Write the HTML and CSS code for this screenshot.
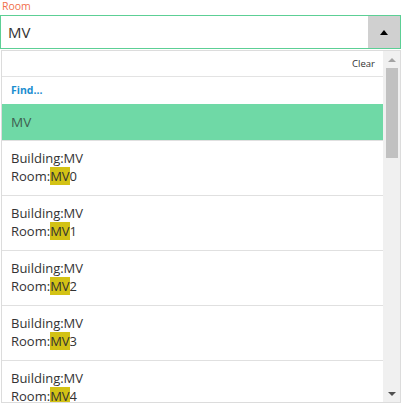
FILE: index.html
```html
<!DOCTYPE html>
<html>
<head>
<meta charset="utf-8">
<link rel="stylesheet" href="styles.css">
</head>
<body>
<div class="field">
  <div class="label">Room</div>
  <div class="input">
    <div class="value">MV</div>
    <div class="toggle"><span class="caret-up"></span></div>
  </div>
  <div class="panel">
    <div class="list">
      <div class="clear-row"><span class="clear">Clear</span></div>
      <div class="find-row">Find...</div>
      <div class="item selected">MV</div>
      <div class="item"><div>Building:MV</div><div>Room:<mark>MV</mark>0</div></div>
      <div class="item"><div>Building:MV</div><div>Room:<mark>MV</mark>1</div></div>
      <div class="item"><div>Building:MV</div><div>Room:<mark>MV</mark>2</div></div>
      <div class="item"><div>Building:MV</div><div>Room:<mark>MV</mark>3</div></div>
      <div class="item"><div>Building:MV</div><div>Room:<mark>MV</mark>4</div></div>
    </div>
    <div class="scrollbar">
      <div class="arrow-btn"><span class="sb-up"></span></div>
      <div class="track"><div class="thumb"></div></div>
      <div class="arrow-btn bottom"><span class="sb-down"></span></div>
    </div>
  </div>
</div>
</body>
</html>
```
FILE: styles.css
```css
html, body {
  margin: 0;
  padding: 0;
  background: #fff;
  font-family: "Open Sans", "Noto Sans", sans-serif;
  color: #333;
  overflow: hidden;
}
.field {
  width: 401px;
}
.label {
  height: 15px;
  line-height: 13px;
  font-size: 10.5px;
  color: #f1704c;
  padding-left: 2px;
}
.input {
  height: 32px;
  border: 1px solid #5ccf95;
  display: flex;
  align-items: stretch;
}
.value {
  flex: 1;
  font-size: 15px;
  line-height: 32px;
  padding-left: 7px;
  color: #333;
}
.toggle {
  width: 32px;
  background: #d0d0d0;
  display: flex;
  align-items: center;
  justify-content: center;
}
.caret-up {
  width: 0;
  height: 0;
  border-left: 4.5px solid transparent;
  border-right: 4.5px solid transparent;
  border-bottom: 5px solid #000;
}
.panel {
  margin: 1px 0 0 1px;
  width: 398px;
  height: 351px;
  border: 1px solid #dcdcdc;
  display: flex;
  overflow: hidden;
}
.list {
  flex: 1;
  overflow: hidden;
}
.clear-row {
  height: 25px;
  border-bottom: 1px solid #e3e3e3;
  display: flex;
  align-items: center;
  justify-content: flex-end;
  padding-right: 8px;
}
.clear {
  font-size: 9.5px;
  color: #333;
}
.find-row {
  height: 27px;
  line-height: 27px;
  padding-left: 9px;
  font-size: 10.5px;
  font-weight: bold;
  color: #1a8ed0;
}
.item {
  font-size: 13px;
  line-height: 18px;
  padding: 8px 9px 10px;
  border-bottom: 1px solid #e0e0e0;
  color: #333;
}
.item.selected {
  background: #6fd9a6;
  color: #3e5e50;
  padding: 9px 9px 9px;
  font-size: 13.5px;
}
mark {
  background: #d3c215;
  color: #333;
}
.scrollbar {
  width: 17px;
  background: #f0f0f0;
  display: flex;
  flex-direction: column;
}
.arrow-btn {
  height: 17px;
  display: flex;
  align-items: center;
  justify-content: center;
}
.arrow-btn.bottom {
  align-items: flex-end;
  padding-bottom: 6px;
  height: 11px;
}
.sb-up {
  width: 0;
  height: 0;
  border-left: 4px solid transparent;
  border-right: 4px solid transparent;
  border-bottom: 4px solid #a3a3a3;
}
.sb-down {
  width: 0;
  height: 0;
  border-left: 4px solid transparent;
  border-right: 4px solid transparent;
  border-top: 4px solid #505050;
}
.track {
  flex: 1;
  display: flex;
  justify-content: center;
}
.thumb {
  width: 12px;
  height: 90px;
  background: #c1c1c1;
}
```
